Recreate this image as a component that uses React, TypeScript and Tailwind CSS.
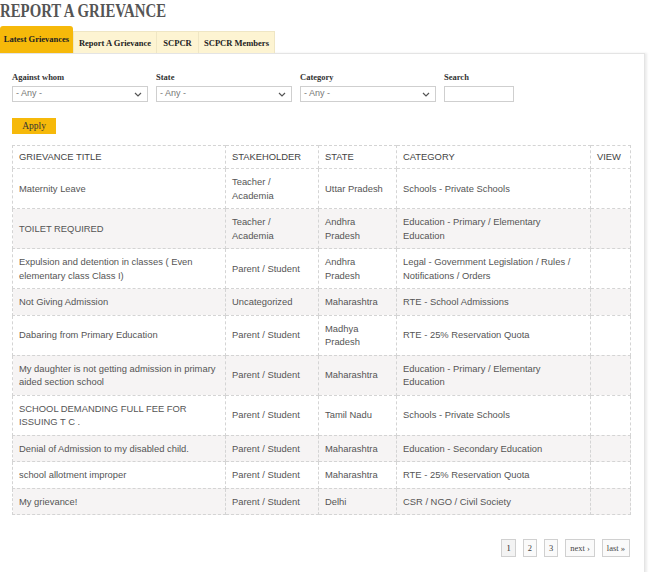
import React from 'react';

interface Row {
  title: string;
  stakeholder: string;
  state: string;
  category: string;
}

const rows: Row[] = [
  { title: 'Maternity Leave', stakeholder: 'Teacher / Academia', state: 'Uttar Pradesh', category: 'Schools - Private Schools' },
  { title: 'TOILET REQUIRED', stakeholder: 'Teacher / Academia', state: 'Andhra Pradesh', category: 'Education - Primary / Elementary Education' },
  { title: 'Expulsion and detention in classes ( Even elementary class Class I)', stakeholder: 'Parent / Student', state: 'Andhra Pradesh', category: 'Legal - Government Legislation / Rules / Notifications / Orders' },
  { title: 'Not Giving Admission', stakeholder: 'Uncategorized', state: 'Maharashtra', category: 'RTE - School Admissions' },
  { title: 'Dabaring from Primary Education', stakeholder: 'Parent / Student', state: 'Madhya Pradesh', category: 'RTE - 25% Reservation Quota' },
  { title: 'My daughter is not getting admission in primary aided section school', stakeholder: 'Parent / Student', state: 'Maharashtra', category: 'Education - Primary / Elementary Education' },
  { title: 'SCHOOL DEMANDING FULL FEE FOR ISSUING T C .', stakeholder: 'Parent / Student', state: 'Tamil Nadu', category: 'Schools - Private Schools' },
  { title: 'Denial of Admission to my disabled child.', stakeholder: 'Parent / Student', state: 'Maharashtra', category: 'Education - Secondary Education' },
  { title: 'school allotment improper', stakeholder: 'Parent / Student', state: 'Maharashtra', category: 'RTE - 25% Reservation Quota' },
  { title: 'My grievance!', stakeholder: 'Parent / Student', state: 'Delhi', category: 'CSR / NGO / Civil Society' },
];

const serif = { fontFamily: '"Liberation Serif", "Times New Roman", serif' };

const Select: React.FC = () => (
  <div className="flex h-[16px] w-[136px] items-center justify-between border border-[#cfcfcf] bg-white pl-[3px] pr-[5px] text-[9px] text-[#777]">
    <span>- Any -</span>
    <svg width="8" height="5" viewBox="0 0 8 5" fill="none">
      <path d="M1 1l3 3 3-3" stroke="#555" strokeWidth="1.2" />
    </svg>
  </div>
);

const App: React.FC = () => {
  const cell = 'border border-dashed border-[#d4d4d4] pl-[6px] pr-[4px] py-[6px] align-middle leading-[13.5px]';
  const head = 'border border-dashed border-[#d4d4d4] pl-[6px] pr-[4px] py-[4px] text-left font-normal leading-[14px]';

  return (
    <div className="h-[572px] w-[650px] overflow-hidden bg-white text-[#555]" style={{ fontFamily: '"Liberation Sans", Arial, sans-serif' }}>
      <h1
        className="h-[26px] origin-left scale-x-[0.78] pt-[1px] text-[19px] font-bold leading-[20px] whitespace-nowrap text-[#555]"
        style={serif}
      >
        REPORT A GRIEVANCE
      </h1>

      <div className="flex items-end text-[8.5px] font-bold text-[#222]" style={serif}>
        <div className="flex h-[27px] w-[73px] items-start justify-center rounded-t-[3px] bg-[#f6b90a] pt-[7px]">Latest Grievances</div>
        <div className="flex h-[22px] w-[84px] items-center justify-center border border-b-0 border-[#efe6c4] bg-[#fdf4d2] pt-[2px]">Report A Grievance</div>
        <div className="flex h-[22px] w-[42px] items-center justify-center border border-b-0 border-l-0 border-[#efe6c4] bg-[#fdf4d2] pt-[2px]">SCPCR</div>
        <div className="flex h-[22px] w-[76px] items-center justify-center border border-b-0 border-l-0 border-[#efe6c4] bg-[#fdf4d2] pt-[2px]">SCPCR Members</div>
      </div>

      <div className="-ml-[1px] h-[600px] w-[646px] border border-[#e4e4e4] pl-[12px] shadow-[2px_0_2px_rgba(0,0,0,0.08)]">
        <div className="flex gap-[8px] pt-[17px]">
          {['Against whom', 'State', 'Category'].map((label) => (
            <div key={label} className="flex w-[136px] flex-col">
              <span className="mb-[3px] h-[12px] text-[8.5px] font-bold text-[#333]" style={serif}>{label}</span>
              <Select />
            </div>
          ))}
          <div className="flex flex-col">
            <span className="mb-[3px] h-[12px] text-[8.5px] font-bold text-[#333]" style={serif}>Search</span>
            <div className="h-[16px] w-[70px] border border-[#cfcfcf] bg-white" />
          </div>
        </div>

        <button className="mt-[16px] flex h-[16px] w-[44px] items-center justify-center bg-[#f6b90a] text-[9.5px] text-[#333]" style={serif}>
          Apply
        </button>

        <table className="mt-[11px] w-[618px] table-fixed border-collapse text-[9.4px]">
          <colgroup>
            <col className="w-[213px]" />
            <col className="w-[93px]" />
            <col className="w-[78px]" />
            <col className="w-[194px]" />
            <col className="w-[40px]" />
          </colgroup>
          <thead>
            <tr className="text-[#444]">
              <th className={`${head} border-b-solid border-b-[#d8d8d8]`}>GRIEVANCE TITLE</th>
              <th className={`${head} border-b-solid border-b-[#d8d8d8]`}>STAKEHOLDER</th>
              <th className={`${head} border-b-solid border-b-[#d8d8d8]`}>STATE</th>
              <th className={`${head} border-b-solid border-b-[#d8d8d8]`}>CATEGORY</th>
              <th className={`${head} border-b-solid border-b-[#d8d8d8]`}>VIEW</th>
            </tr>
          </thead>
          <tbody>
            {rows.map((r, i) => (
              <tr key={i} className={i % 2 === 1 ? 'bg-[#f6f4f4]' : 'bg-white'}>
                <td className={cell}>{r.title}</td>
                <td className={cell}>{r.stakeholder}</td>
                <td className={cell}>{r.state}</td>
                <td className={`${cell} pr-[14px]`}>{r.category}</td>
                <td className={cell}></td>
              </tr>
            ))}
          </tbody>
        </table>

        <div className="mt-[24px] flex w-[618px] justify-end gap-[7px] text-[8.5px] text-[#444]" style={serif}>
          {['1', '2', '3', 'next ›', 'last »'].map((p) => (
            <span
              key={p}
              className={`flex h-[18px] items-center border border-[#d0d0d0] px-[4px] ${p === '1' ? 'bg-[#f3f3f3] text-[#222]' : 'bg-[#fafafa]'}`}
            >
              {p}
            </span>
          ))}
        </div>
      </div>
    </div>
  );
};

export default App;
